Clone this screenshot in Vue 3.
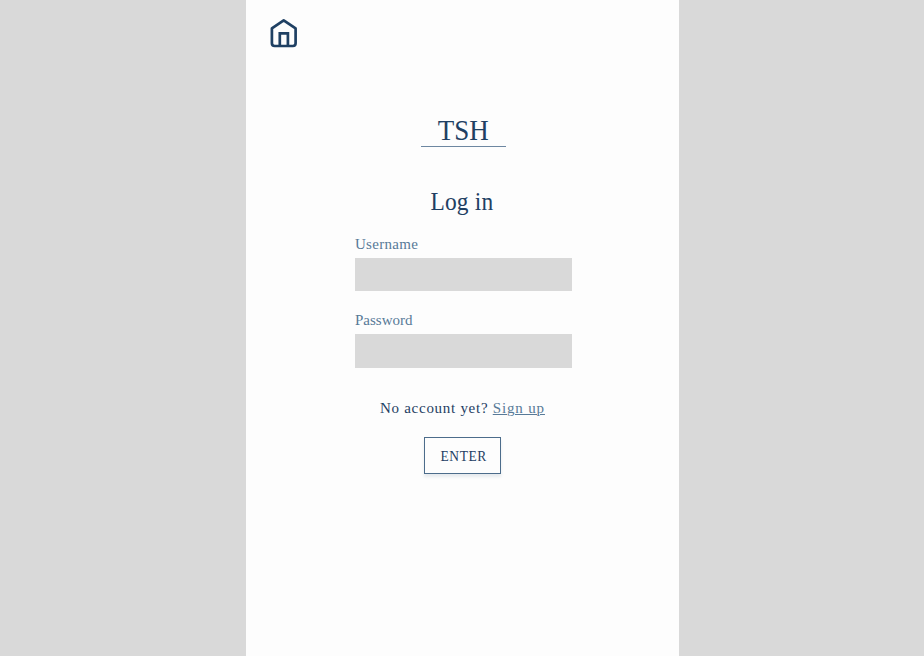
<script setup>
import { ref } from 'vue'

const username = ref('')
const password = ref('')
</script>

<template>
  <div class="page">
    <main class="screen">
      <a class="home" aria-label="Home">
        <svg width="30" height="32" viewBox="0 0 30 32" fill="none" stroke="#1f4063" stroke-width="2.7" stroke-linejoin="round">
          <path d="M2.9 11.4 L14.7 3.3 L26.6 11.4 V26.3 Q26.6 29 23.9 29 H5.6 Q2.9 29 2.9 26.3 Z" />
          <path d="M10.8 28.8 V16.4 H18.9 V28.8" stroke-linejoin="miter" />
        </svg>
      </a>
      <div class="brand"><span class="condensed">TSH</span></div>
      <h1><span class="condensed">Log in</span></h1>
      <form class="form" @submit.prevent>
        <label class="username"><span>Username</span><input v-model="username" type="text" /></label>
        <label class="password"><span>Password</span><input v-model="password" type="password" /></label>
        <p class="hint">No account yet? <a>Sign up</a></p>
        <button type="submit"><span class="condensed">ENTER</span></button>
      </form>
    </main>
  </div>
</template>

<style>
body {
  background: #d9d9d9;
}
</style>

<style scoped>
.page {
  display: flex;
  height: 656px;
  padding-left: 246.4px;
  background: #d9d9d9;
  font-family: "Liberation Serif", serif;
  color: #1f4063;
}
.screen {
  box-sizing: border-box;
  display: flex;
  flex-direction: column;
  align-items: center;
  width: 432.8px;
  padding-top: 17px;
  background: #fdfdfd;
}
.home {
  display: block;
  align-self: flex-start;
  height: 32px;
  margin-left: 22.6px;
}
.home svg {
  display: block;
}
.condensed {
  display: inline-block;
  transform: scaleX(0.9);
}
.brand {
  box-sizing: border-box;
  width: 85px;
  height: 35px;
  margin: 63px 0 0 1.4px;
  border-bottom: 1px solid #6d87a1;
  font-size: 30px;
  line-height: 36px;
  text-align: center;
}
h1 {
  margin: 39px 2px 0 0;
  font-size: 26px;
  font-weight: 400;
  line-height: 32px;
  letter-spacing: 0.2px;
}
.form {
  display: flex;
  flex-direction: column;
  align-items: center;
  width: 217px;
  margin: 17px 0 0 1.4px;
}
label {
  display: block;
  width: 217px;
  color: #587a98;
  font-size: 15px;
}
label span {
  display: block;
  height: 23px;
  line-height: 18px;
}
.username {
  letter-spacing: 0.3px;
}
.password {
  margin-top: 20px;
}
input {
  display: block;
  box-sizing: border-box;
  width: 217px;
  height: 33.3px;
  margin: 0;
  padding: 0 8px;
  border: 0;
  border-radius: 0;
  background: #d9d9d9;
  font: inherit;
  outline: none;
}
.hint {
  margin: 31px 2px 0 0;
  font-size: 15px;
  line-height: 18px;
  letter-spacing: 0.72px;
  white-space: nowrap;
}
.hint a {
  color: #587a98;
  letter-spacing: 0.85px;
  text-decoration: underline;
  text-decoration-thickness: 1px;
}
button {
  box-sizing: border-box;
  width: 77px;
  height: 37.4px;
  margin: 20.2px 1px 0 0;
  padding: 2px 0 0 1px;
  border: 1px solid #4c6c8b;
  border-radius: 0;
  background: #fdfdfd;
  box-shadow: 0 3px 3px rgba(31, 64, 99, 0.1);
  color: #1f4063;
  font-family: inherit;
  font-size: 15px;
  letter-spacing: 0.6px;
}
</style>
